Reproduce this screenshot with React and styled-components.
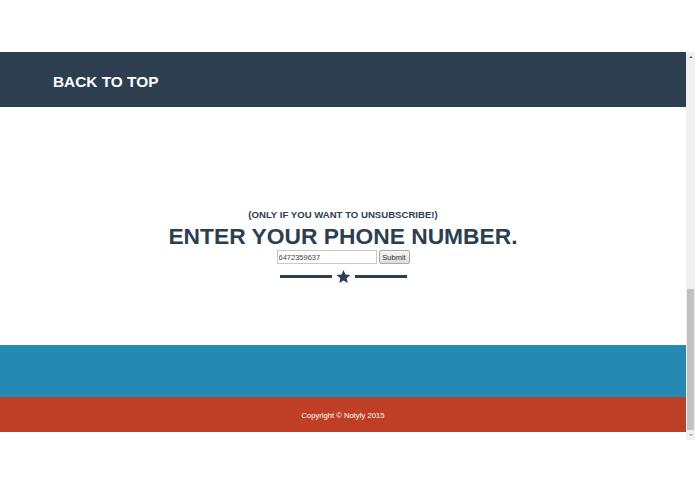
import React from 'react'
import styled, { createGlobalStyle } from 'styled-components'

const GlobalStyle = createGlobalStyle`
    html, body {
        margin: 0;
        padding: 0;
        background: #ffffff;
    }
    body {
        font-family: "Liberation Sans", Arial, sans-serif;
    }
`

const Window = styled.div`
    margin-top: 52px;
    height: 388px;
    display: flex;
    width: 695px;
`

const Page = styled.div`
    flex: 1;
    display: flex;
    flex-direction: column;
`

const TopBar = styled.header`
    height: 55px;
    background: #2d3e50;
    display: flex;
    align-items: center;
    padding-left: 53px;
`

const TopLink = styled.a`
    color: #ffffff;
    font-weight: bold;
    font-size: 15.4px;
    text-decoration: none;
    margin-top: 5px;
`

const Unsubscribe = styled.section`
    height: 238px;
    display: flex;
    flex-direction: column;
    align-items: center;
    padding-top: 102px;
    box-sizing: border-box;
    color: #2d3e50;
`

const Note = styled.h3`
    margin: 0;
    font-size: 9.6px;
    font-weight: bold;
    line-height: 11px;
`

const Title = styled.h1`
    margin: 4px 0 0;
    font-size: 22.8px;
    font-weight: bold;
    line-height: 24px;
`

const Form = styled.form`
    display: flex;
    gap: 2px;
    margin-top: 2px;
`

const PhoneInput = styled.input`
    width: 100px;
    height: 14px;
    box-sizing: border-box;
    border: 1px solid #c8c8c8;
    padding: 0 1px;
    font-size: 7.5px;
    font-family: "Liberation Sans", Arial, sans-serif;
    color: #444;
    outline: none;
`

const SubmitButton = styled.button`
    width: 31px;
    height: 14px;
    box-sizing: border-box;
    padding: 0;
    border: 1px solid #aaaaaa;
    border-radius: 2px;
    background: linear-gradient(#f6f6f6, #dddddd);
    font-size: 7.5px;
    font-family: "Liberation Sans", Arial, sans-serif;
    color: #333;
`

const Divider = styled.div`
    display: flex;
    align-items: center;
    gap: 4px;
    margin-top: 5px;
`

const Rule = styled.span`
    display: block;
    width: 52px;
    height: 3px;
    background: #2d3e50;
`

const BlueBand = styled.div`
    height: 52px;
    background: #248ab4;
`

const Footer = styled.footer`
    height: 35px;
    background: #bf3f26;
    display: flex;
    align-items: center;
    justify-content: center;
    color: #ffffff;
    font-size: 7.6px;
    padding-top: 1px;
    box-sizing: border-box;
`

const Scrollbar = styled.div`
    width: 9px;
    background: #f0f0f0;
    display: flex;
    flex-direction: column;
    align-items: center;
`

const Arrow = styled.span`
    width: 0;
    height: 0;
    border-left: 2px solid transparent;
    border-right: 2px solid transparent;
    ${props => props.down
        ? 'border-top: 2px solid #a0a0a0;'
        : 'border-bottom: 2px solid #606060;'}
    margin: 4px 0;
`

const Track = styled.div`
    flex: 1;
    width: 100%;
    display: flex;
    flex-direction: column;
    justify-content: flex-end;
`

const Thumb = styled.div`
    height: 141px;
    margin: 0 1px;
    background: #c1c1c1;
`

const Star = () => (
    <svg width="15" height="15" viewBox="0 0 24 24">
        <path
            fill="#2d3e50"
            d="M12 1.5l3.1 7.3 7.9.6-6 5.2 1.8 7.8L12 18.2l-6.8 4.2 1.8-7.8-6-5.2 7.9-.6z"
        />
    </svg>
)

const App = () => {
    return (
        <>
            <GlobalStyle />
            <Window>
                <Page>
                    <TopBar>
                        <TopLink href="#top">BACK TO TOP</TopLink>
                    </TopBar>
                    <Unsubscribe>
                        <Note>(ONLY IF YOU WANT TO UNSUBSCRIBE!)</Note>
                        <Title>ENTER YOUR PHONE NUMBER.</Title>
                        <Form onSubmit={e => e.preventDefault()}>
                            <PhoneInput defaultValue="6472359637" />
                            <SubmitButton type="submit">Submit</SubmitButton>
                        </Form>
                        <Divider>
                            <Rule />
                            <Star />
                            <Rule />
                        </Divider>
                    </Unsubscribe>
                    <BlueBand />
                    <Footer>Copyright © Notyfy 2015</Footer>
                </Page>
                <Scrollbar>
                    <Arrow />
                    <Track>
                        <Thumb />
                    </Track>
                    <Arrow down />
                </Scrollbar>
            </Window>
        </>
    )
}

export default App
